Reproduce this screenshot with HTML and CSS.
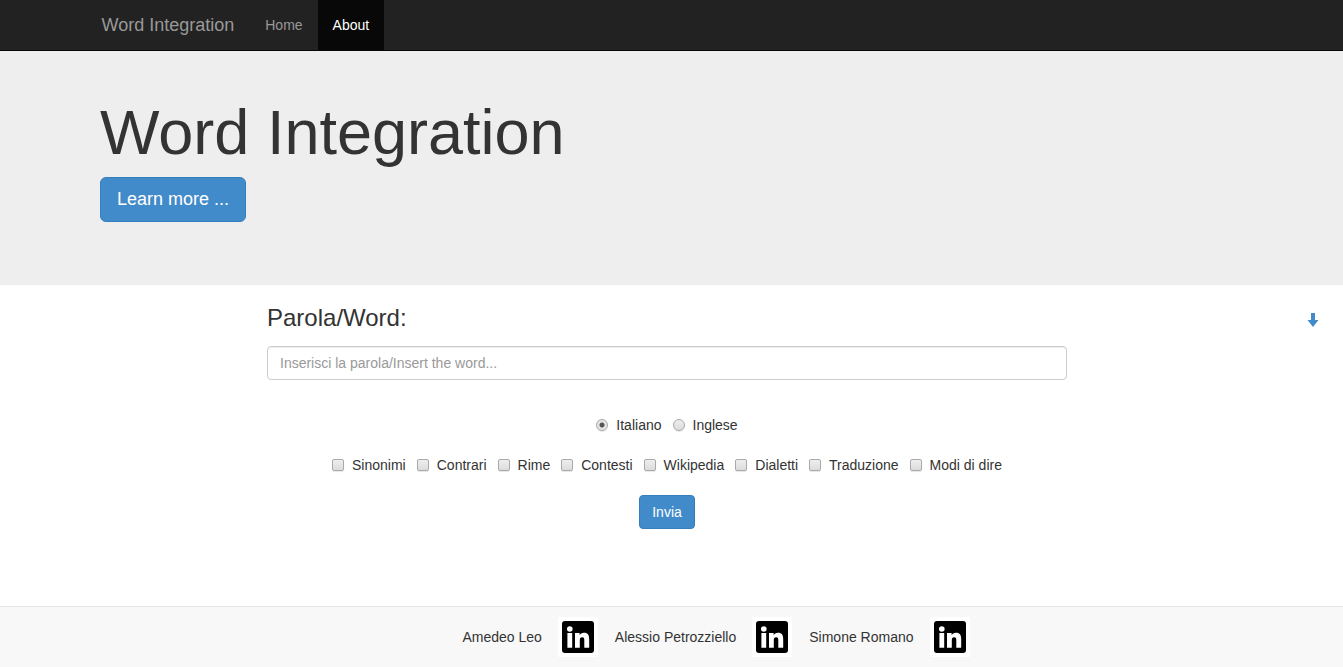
FILE: index.html
```html
<!DOCTYPE html>
<html lang="it">
<head>
<meta charset="utf-8">
<meta name="viewport" content="width=device-width, initial-scale=1">
<title>Word Integration</title>
<link rel="stylesheet" href="styles.css">
</head>
<body>
<svg class="symbols" aria-hidden="true">
  <symbol id="linkedin" viewBox="0 0 40 40">
    <rect x="4" y="4" width="32" height="32" rx="3" fill="#000"/>
    <circle cx="11.800" cy="12" r="2.800" fill="#fff"/>
    <path fill="#fff" d="M9.400 16h4.800v14.800H9.400zM17 16h4.600v2c.8-1.300 2.200-2.300 4.300-2.300 4.300 0 5.300 2.700 5.300 6.500v8.600h-4.900v-7.600c0-1.800-.3-3-2.100-3s-2.400 1.200-2.400 3v7.600H17z"/>
  </symbol>
</svg>
<header class="navbar">
  <nav class="navbar-inner">
    <a class="brand" href="#">Word Integration</a>
    <a class="nav-link" href="#">Home</a>
    <a class="nav-link active" href="#">About</a>
  </nav>
</header>
<section class="hero">
  <div class="hero-inner">
    <h1>Word Integration</h1>
    <a class="btn btn-large" href="#">Learn more ...</a>
  </div>
</section>
<main class="content">
  <form class="search">
    <label class="title" for="word">Parola/Word:</label>
    <input class="field" id="word" type="text" placeholder="Inserisci la parola/Insert the word...">
    <div class="options languages">
      <label class="option"><input class="radio" type="radio" name="lang" checked>Italiano</label>
      <label class="option"><input class="radio" type="radio" name="lang">Inglese</label>
    </div>
    <div class="options">
      <label class="option"><input class="check" type="checkbox">Sinonimi</label>
      <label class="option"><input class="check" type="checkbox">Contrari</label>
      <label class="option"><input class="check" type="checkbox">Rime</label>
      <label class="option"><input class="check" type="checkbox">Contesti</label>
      <label class="option"><input class="check" type="checkbox">Wikipedia</label>
      <label class="option"><input class="check" type="checkbox">Dialetti</label>
      <label class="option"><input class="check" type="checkbox">Traduzione</label>
      <label class="option"><input class="check" type="checkbox">Modi di dire</label>
    </div>
    <button class="btn submit" type="button">Invia</button>
  </form>
  <a class="down" href="#footer" aria-label="Vai in fondo">
    <svg viewBox="0 0 12 14" width="12" height="14"><path fill="#428bca" d="M4 0h4v7h3.500L6 14 .5 7H4z"/></svg>
  </a>
</main>
<footer class="footer" id="footer">
  <div class="person">Amedeo Leo <a class="tile" href="#" aria-label="LinkedIn Amedeo Leo"><svg width="40" height="40"><use href="#linkedin"/></svg></a></div>
  <div class="person">Alessio Petrozziello <a class="tile" href="#" aria-label="LinkedIn Alessio Petrozziello"><svg width="40" height="40"><use href="#linkedin"/></svg></a></div>
  <div class="person">Simone Romano <a class="tile" href="#" aria-label="LinkedIn Simone Romano"><svg width="40" height="40"><use href="#linkedin"/></svg></a></div>
</footer>
</body>
</html>
```
FILE: styles.css
```css
* { box-sizing: border-box; }
body {
  margin: 0;
  min-height: 100vh;
  display: flex;
  flex-direction: column;
  font: 14px/20px "Liberation Sans", Arial, sans-serif;
  color: #333;
  background: #fff;
}
a { text-decoration: none; }
.symbols { display: none; }

.navbar { background: #222; border-bottom: 1px solid #080808; }
.navbar-inner {
  display: flex;
  max-width: 1140px;
  margin: 0 auto;
}
.brand, .nav-link { padding: 15px; color: #999; }
.brand { padding: 15px 16px 15px 0; font-size: 18px; }
.nav-link.active { color: #fff; background: #080808; }

.hero { background: #eee; padding: 50px 0 63px; }
.hero-inner { max-width: 1143px; margin: 0 auto; }
h1 { margin: 0 0 13px; font-size: 63px; line-height: 63px; font-weight: 500; }

.btn {
  display: inline-block;
  padding: 6px 12px;
  font: inherit;
  color: #fff;
  background: #428bca;
  border: 1px solid #357ebd;
  border-radius: 4px;
  cursor: pointer;
}
.btn-large {
  vertical-align: top;
  padding: 10px 16px;
  font-size: 18px;
  line-height: 23px;
  border-radius: 6px;
}

.content {
  display: grid;
  grid-template-columns: 1fr minmax(0, 800px) 1fr;
  padding: 20px 9px 40px 0;
}
.search {
  grid-column: 2;
  display: flex;
  flex-direction: column;
  align-items: center;
}
.title { align-self: flex-start; font-size: 24px; line-height: 26px; margin-bottom: 15px; }
.field {
  width: 100%;
  height: 34px;
  padding: 6px 12px;
  font: inherit;
  color: #555;
  background: #fff;
  border: 1px solid #ccc;
  border-radius: 4px;
  box-shadow: inset 0 1px 1px rgba(0, 0, 0, .075);
}
.field::placeholder { color: #999; opacity: 1; }
.options { display: flex; flex-wrap: wrap; justify-content: center; gap: 11px; margin-bottom: 20px; }
.languages { margin-top: 35px; }
.option { display: flex; align-items: center; gap: 8px; }
.radio, .check {
  appearance: none;
  width: 12px;
  height: 12px;
  margin: 0;
  border: 1px solid #aaa;
  background: linear-gradient(#eee, #dcdcdc);
  box-shadow: 0 1px 1px rgba(0, 0, 0, .1);
}
.check { border-radius: 2px; }
.radio { border-radius: 50%; }
.radio:checked { background: radial-gradient(circle, #555 0 2px, #e4e4e4 3px); }

.down { grid-column: 3; justify-self: end; padding: 8px 15px 0 0; }
.down svg { display: block; }

.footer {
  margin-top: auto;
  display: flex;
  justify-content: center;
  gap: 17px;
  padding: 10px 0 10px 89px;
  background: #f8f8f8;
  border-top: 1px solid #e7e7e7;
}
.person { display: flex; align-items: center; gap: 16px; line-height: 18px; }
.tile { background: #fff; }
.tile svg { display: block; }
```
